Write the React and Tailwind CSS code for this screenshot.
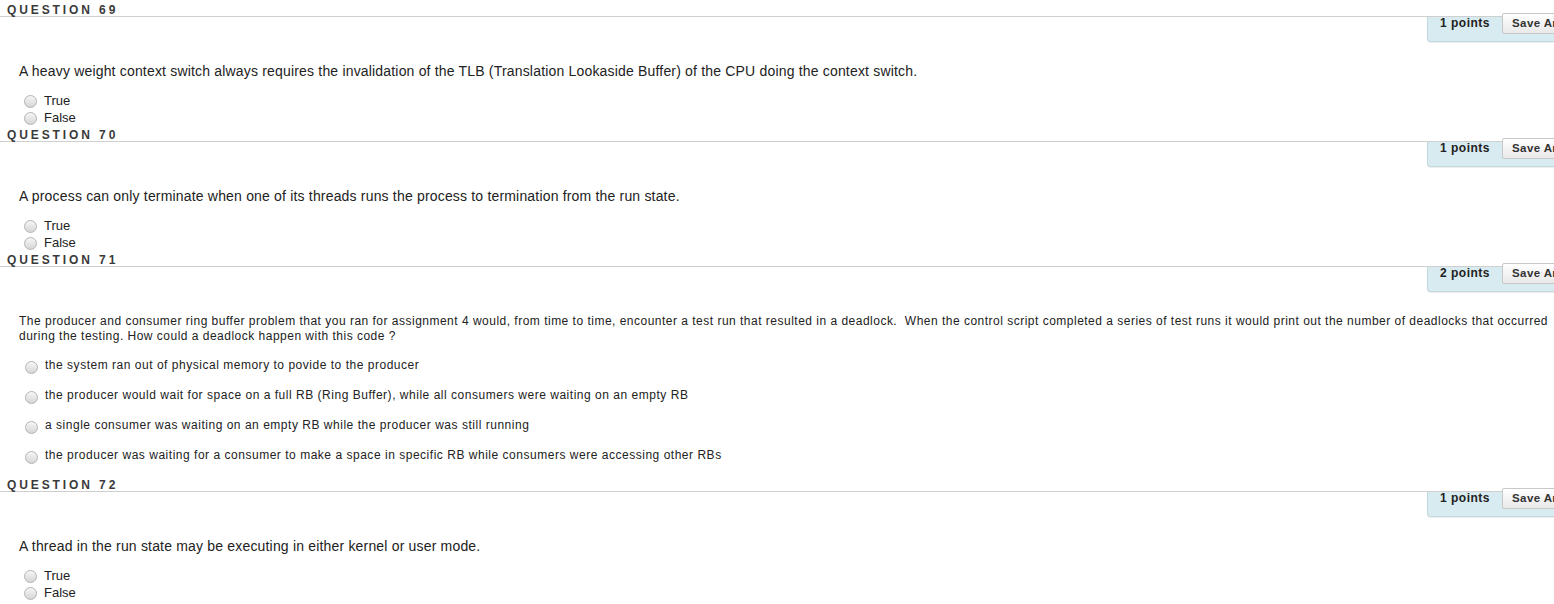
import React from "react";

const font = { fontFamily: '"Liberation Sans", Arial, sans-serif' };

function Radio({ className = "" }) {
  return (
    <span
      className={
        "inline-block w-[13px] h-[13px] rounded-full border border-[#b4b4b4] bg-gradient-to-b from-[#f6f6f6] to-[#d6d6d6] shrink-0 " +
        className
      }
    />
  );
}

function Header({ num, points }) {
  return (
    <>
      <div className="h-[17px] border-b border-[#cfcfcf] pl-[7px] pt-[4px]">
        <span className="block text-[12px] leading-[12px] font-bold tracking-[2.9px] text-[#3a3a3a]">
          QUESTION {num}
        </span>
      </div>
      <div className="flex justify-end">
        <div className="h-[25px] w-[127px] bg-[#d8ebf1] rounded-bl-[4px] border-l border-b border-[#c3d9e0] shadow-[0_1px_1px_rgba(0,0,0,0.08)] flex items-start pl-[12px]">
          <span className="mt-[-2px] text-[12px] leading-[16px] font-bold tracking-[0.5px] text-[#222] whitespace-nowrap">
            {points} points
          </span>
          <span className="ml-[12px] mt-[-4px] h-[21px] px-[9px] border border-[#c8c8c8] rounded-[2px] bg-gradient-to-b from-[#ffffff] to-[#e9e9e9] text-[11.5px] leading-[19px] font-bold tracking-[0.4px] text-[#333] whitespace-nowrap">
            Save Answer
          </span>
        </div>
      </div>
    </>
  );
}

function TFQuestion({ num, points, text }) {
  return (
    <div className="h-[125px]">
      <Header num={num} points={points} />
      <div className="pl-[19px] mt-[21px] text-[14px] leading-[16px] tracking-[0.18px] text-[#222]">{text}</div>
      <div className="mt-[13px] pl-[24px] flex flex-col">
        {["True", "False"].map((o) => (
          <div key={o} className="flex items-center h-[17px]">
            <Radio className="mt-[2px]" />
            <span className="ml-[7px] text-[13px] leading-[15px] text-[#222]">{o}</span>
          </div>
        ))}
      </div>
    </div>
  );
}

export default function App() {
  const opts = [
    "the system ran out of physical memory to povide to the producer",
    "the producer would wait for space on a full RB (Ring Buffer), while all consumers were waiting on an empty RB",
    "a single consumer was waiting on an empty RB while the producer was still running",
    "the producer was waiting for a consumer to make a space in specific RB while consumers were accessing other RBs",
  ];
  return (
    <div className="w-[1554px] h-[604px] overflow-hidden bg-white" style={font}>
      <TFQuestion
        num="69"
        points="1"
        text="A heavy weight context switch always requires the invalidation of the TLB (Translation Lookaside Buffer) of the CPU doing the context switch."
      />
      <TFQuestion
        num="70"
        points="1"
        text="A process can only terminate when one of its threads runs the process to termination from the run state."
      />
      <div className="h-[225px]">
        <Header num="71" points="2" />
        <div className="pl-[19px] mt-[22px] text-[12px] leading-[15px] tracking-[0.49px] text-[#222]">
          <span className="whitespace-nowrap">
            The producer and consumer ring buffer problem that you ran for assignment 4 would, from time to time, encounter a test run that resulted in a deadlock.{"\u00a0 "}When the control script completed a series of test runs it would print out the number of deadlocks that occurred
          </span>
          <br />
          during the testing. How could a deadlock happen with this code ?
        </div>
        <div className="mt-[14px] pl-[25px] flex flex-col gap-[15px]">
          {opts.map((o) => (
            <div key={o} className="flex items-center h-[15px]">
              <Radio className="mt-[3px]" />
              <span className="ml-[7px] text-[12px] leading-[15px] tracking-[0.52px] text-[#222]">{o}</span>
            </div>
          ))}
        </div>
      </div>
      <TFQuestion
        num="72"
        points="1"
        text="A thread in the run state may be executing in either kernel or user mode."
      />
    </div>
  );
}
